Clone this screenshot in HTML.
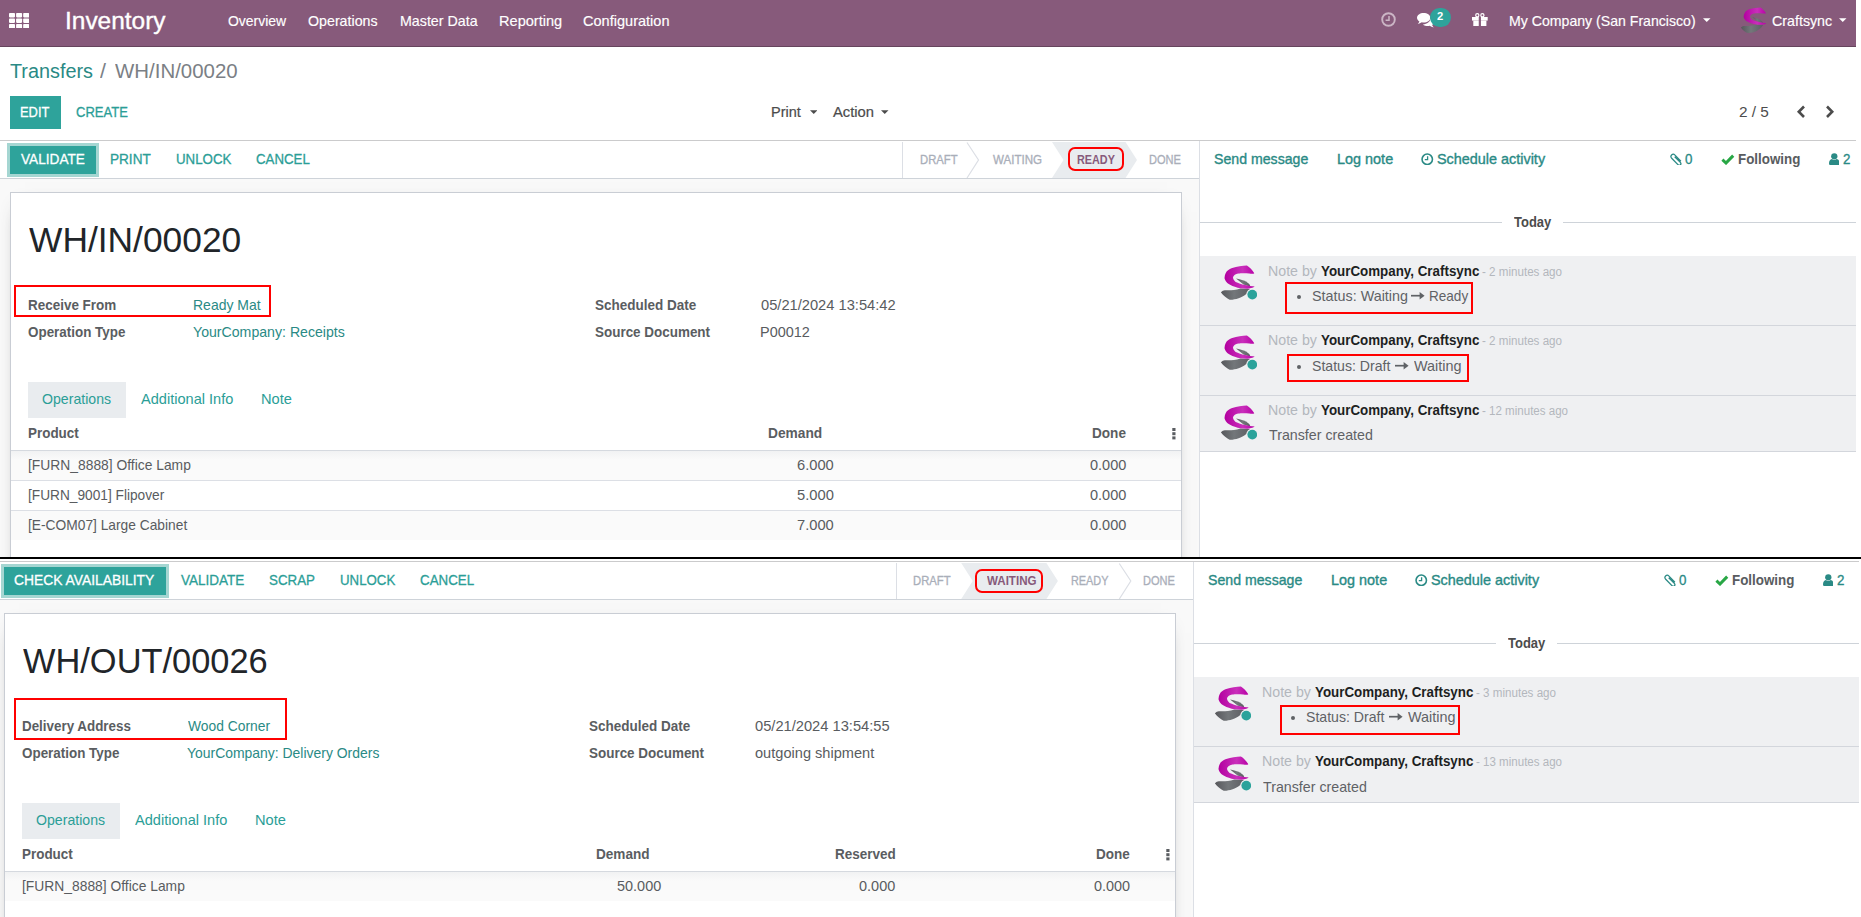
<!DOCTYPE html><html lang="en"><head><meta charset="utf-8"><title>Odoo - Transfers</title><style>

html,body{margin:0;padding:0;background:#fff}
body{width:1861px;height:917px;position:relative;overflow:hidden;font-family:"Liberation Sans",sans-serif}
.screen{position:absolute;left:0;overflow:hidden;background:#fff}
#top{top:0;width:1856px;height:557px}
#bot{top:559px;width:1859px;height:358px}
#bot .in{position:absolute;left:0;top:-559px;width:1859px;height:917px}
.sep{position:absolute;left:0;top:557px;width:1861px;height:2px;background:#000}
.t{position:absolute;white-space:pre;line-height:20px;height:20px;transform-origin:0 50%}

</style></head><body>
<svg width="0" height="0" style="position:absolute" aria-hidden="true"><defs><linearGradient id="lgm" x1="0" y1="0" x2="1" y2="0"><stop offset="0" stop-color="#b3009f"/><stop offset=".6" stop-color="#c92fbb"/><stop offset="1" stop-color="#b800a6"/></linearGradient><linearGradient id="lgg" x1="0" y1="0" x2="1" y2="0"><stop offset="0" stop-color="#56575b"/><stop offset=".45" stop-color="#73777a"/><stop offset="1" stop-color="#5d5e63"/></linearGradient></defs></svg>
<div class="screen" id="top">
<nav class="o_main_navbar">
<div style="position:absolute;left:0px;top:0px;width:1856px;height:46px;background:#875a7b;"></div>
<div style="position:absolute;left:0px;top:46px;width:1856px;height:1px;background:#66455d;"></div>
<svg style="position:absolute;left:9.3px;top:12.7px;" width="20.2" height="15.4" viewBox="0 0 20.2 15.4"><rect x="0.00" y="0.00" width="6" height="4.4" rx=".8" fill="#fff"/><rect x="7.10" y="0.00" width="6" height="4.4" rx=".8" fill="#fff"/><rect x="14.20" y="0.00" width="6" height="4.4" rx=".8" fill="#fff"/><rect x="0.00" y="5.50" width="6" height="4.4" rx=".8" fill="#fff"/><rect x="7.10" y="5.50" width="6" height="4.4" rx=".8" fill="#fff"/><rect x="14.20" y="5.50" width="6" height="4.4" rx=".8" fill="#fff"/><rect x="0.00" y="11.00" width="6" height="4.4" rx=".8" fill="#fff"/><rect x="7.10" y="11.00" width="6" height="4.4" rx=".8" fill="#fff"/><rect x="14.20" y="11.00" width="6" height="4.4" rx=".8" fill="#fff"/></svg>
<svg style="position:absolute;left:1380.6px;top:12.1px;" width="15" height="15" viewBox="0 0 15 15"><circle cx="7.5" cy="7.5" r="6.3" fill="none" stroke="#cbb5c5" stroke-width="1.9"/><path d="M8 4v4.3H4.6" fill="none" stroke="#cbb5c5" stroke-width="1.5"/></svg>
<svg style="position:absolute;left:1417px;top:13.4px;" width="17.5" height="14.5" viewBox="0 0 17.5 14.5"><path fill="#fff" d="M6.6 0C3 0 0 2.1 0 4.8c0 1.5.9 2.8 2.4 3.7-.3.9-.9 1.7-1.6 2.4 1.5-.2 2.9-.8 4-1.6.6.1 1.200.2 1.800.2 3.700 0 6.700-2.100 6.700-4.800S10.300 0 6.600 0z"/><path fill="#fff" d="M14.600 5.500c0 3-3.300 5.400-7.500 5.600 1.200 1 3 1.600 5 1.600.6 0 1.200-.1 1.800-.2 1.100.8 2.500 1.400 4 1.600-.7-.7-1.300-1.500-1.600-2.400 1.500-.9 2.400-2.200 2.400-3.700 0-1-.4-1.900-1.100-2.700z" transform="translate(-1.2 .3)"/></svg>
<div style="position:absolute;left:1430px;top:7.6px;width:21px;height:19px;border-radius:9.500px;background:#2ea39b"></div>
<svg style="position:absolute;left:1472.3px;top:12.7px;" width="15.7" height="13.7" viewBox="0 0 15.7 13.7"><g fill="#fff"><rect x="0" y="4" width="15.7" height="3.6"/><rect x="1.3" y="7.6" width="13.1" height="6.1"/></g><rect x="6.750" y="4" width="2.200" height="9.700" fill="#875a7b"/><circle cx="5.3" cy="2.300" r="1.600" fill="none" stroke="#fff" stroke-width="1.200"/><circle cx="10.400" cy="2.300" r="1.600" fill="none" stroke="#fff" stroke-width="1.200"/></svg>
<svg style="position:absolute;left:1703px;top:18px;" width="7.5" height="4" viewBox="0 0 8 4"><path d="M0 0h8l-4 4z" fill="#fff"/></svg>
<svg style="position:absolute;left:1740.5px;top:7.3px;" width="27" height="27" viewBox="0 0 36 36"><path fill="url(#lgg)" d="M15.1 13.6 C19.5 14.2 24.5 15.8 27.6 18.6 C28.9 19.8 29.3 20.8 29.3 21.7 L22.5 19.4 Z"/><path fill="url(#lgg)" d="M-0.1 27.4 C1 26 2.5 25.2 3.8 25.2 C8 25.6 13 25.4 19.5 23.5 L29.3 24 C28 27.5 23 31.5 17.6 33.3 C14 34.5 10.5 35 8.7 34.7 C6 33.5 2 30.5 -0.1 27.4 Z"/><path fill="url(#lgm)" d="M25.9 0.6 C28.5 2 31.5 5.5 33.3 8.2 C32.5 9 30 8.7 28.3 8.5 C24 8.1 19.5 8.2 17.5 8.5 C13.5 9.2 11.5 11.5 12.2 13.6 C12.8 15.4 13.8 16.2 14.6 17 C20 19.3 28 21.3 33.7 21.5 C31.5 23 28 23.9 25.9 23.7 C21 23.6 17 22.9 14.6 22 C10 20.5 7.3 19 6.3 18 C4 15.5 3.2 13 3.6 12.2 C3.9 9.5 4.8 7.8 5.8 6.3 C7.5 4.4 9.5 3.4 11.2 2.9 C16 1.6 21.5 0.9 25.9 0.6 Z"/></svg>
<svg style="position:absolute;left:1839px;top:18px;" width="7.5" height="4" viewBox="0 0 8 4"><path d="M0 0h8l-4 4z" fill="#fff"/></svg>
<span class="t" style="left:65.08px;top:11.00px;font-size:24px;color:#fff;-webkit-text-stroke:0.35px #fff;transform:scaleX(1.0187);">Inventory</span>
<span class="t" style="left:228.38px;top:11.00px;font-size:14.3px;color:#fff;-webkit-text-stroke:0.15px #fff;transform:scaleX(0.9768);">Overview</span>
<span class="t" style="left:308.36px;top:11.00px;font-size:14.3px;color:#fff;-webkit-text-stroke:0.15px #fff;transform:scaleX(0.9948);">Operations</span>
<span class="t" style="left:399.59px;top:11.00px;font-size:14.3px;color:#fff;-webkit-text-stroke:0.15px #fff;transform:scaleX(0.9965);">Master Data</span>
<span class="t" style="left:499.07px;top:11.00px;font-size:14.3px;color:#fff;-webkit-text-stroke:0.15px #fff;transform:scaleX(1.0195);">Reporting</span>
<span class="t" style="left:583.31px;top:11.00px;font-size:14.3px;color:#fff;-webkit-text-stroke:0.15px #fff;transform:scaleX(1.0172);">Configuration</span>
<span class="t" style="left:1437.31px;top:6.00px;font-size:11.2px;color:#fff;font-weight:700;transform:scaleX(1.0023);">2</span>
<span class="t" style="left:1508.60px;top:11.00px;font-size:14.3px;color:#fff;-webkit-text-stroke:0.15px #fff;transform:scaleX(0.9872);">My Company (San Francisco)</span>
<span class="t" style="left:1771.93px;top:11.00px;font-size:14.3px;color:#fff;-webkit-text-stroke:0.15px #fff;transform:scaleX(0.9966);">Craftsync</span>
</nav>
<header class="o_control_panel">
<div style="position:absolute;left:10px;top:96px;width:51px;height:33px;background:#2ea39b;"></div>
<svg style="position:absolute;left:809.5px;top:109.5px;" width="7.5" height="4" viewBox="0 0 8 4"><path d="M0 0h8l-4 4z" fill="#4c4c4c"/></svg>
<svg style="position:absolute;left:881px;top:109.5px;" width="7.5" height="4" viewBox="0 0 8 4"><path d="M0 0h8l-4 4z" fill="#4c4c4c"/></svg>
<svg style="position:absolute;left:1795.5px;top:104.5px;" width="10" height="13.5" viewBox="0 0 10 13.5"><path d="M8 1.5 2.800 6.750 8 12" fill="none" stroke="#4c4c4c" stroke-width="2.600"/></svg>
<svg style="position:absolute;left:1825px;top:104.5px;" width="10" height="13.5" viewBox="0 0 10 13.5"><path d="M2 1.5 7.200 6.750 2 12" fill="none" stroke="#4c4c4c" stroke-width="2.600"/></svg>
<span class="t" style="left:10.01px;top:61.00px;font-size:19.5px;color:#2a8a85;transform:scaleX(1.0162);">Transfers</span>
<span class="t" style="left:100.07px;top:61.00px;font-size:19.5px;color:#7b8187;transform:scaleX(1.0991);">/</span>
<span class="t" style="left:115.04px;top:61.00px;font-size:19.5px;color:#7b7f85;transform:scaleX(1.0478);">WH/IN/00020</span>
<span class="t" style="left:20.21px;top:102.00px;font-size:14.73px;color:#fff;-webkit-text-stroke:0.3px #fff;transform:scaleX(0.8762);">EDIT</span>
<span class="t" style="left:76.44px;top:102.00px;font-size:14.73px;color:#2b9e97;-webkit-text-stroke:0.3px #2b9e97;transform:scaleX(0.8848);">CREATE</span>
<span class="t" style="left:770.59px;top:102.00px;font-size:14.3px;color:#4c4c4c;-webkit-text-stroke:0.2px #4c4c4c;transform:scaleX(1.0133);">Print</span>
<span class="t" style="left:832.59px;top:102.00px;font-size:14.3px;color:#4c4c4c;-webkit-text-stroke:0.2px #4c4c4c;transform:scaleX(1.0331);">Action</span>
<span class="t" style="left:1739.23px;top:102.00px;font-size:14.3px;color:#4c4c4c;transform:scaleX(1.0756);">2 / 5</span>
</header>
<main class="o_form_sheet_bg">
<div style="position:absolute;left:0px;top:179px;width:1199px;height:378px;background:#f9f9f9;"></div>
<div style="position:absolute;left:10px;top:192px;width:1170px;height:395px;background:#fff;border:1px solid #c9cdd4;box-shadow:0 5px 20px -15px rgba(0,0,0,.8)"></div>
<div style="position:absolute;left:14px;top:285px;width:253px;height:28px;border:2px solid #f00"></div>
<div style="position:absolute;left:28px;top:382px;width:98px;height:36px;background:#e9ecef;"></div>
<svg style="position:absolute;left:1172px;top:428px;" width="4" height="11.5" viewBox="0 0 4 11.5"><g fill="#5a5d61"><rect x=".3" y="0" width="3.200" height="3"/><rect x=".3" y="4.200" width="3.200" height="3"/><rect x=".3" y="8.400" width="3.200" height="3"/></g></svg>
<div style="position:absolute;left:11px;top:450px;width:1170px;height:1px;background:#d5d9df;"></div>
<div style="position:absolute;left:11px;top:451px;width:1170px;height:29px;background:linear-gradient(#f1f2f3,#fafafa 9px,#fafafa);"></div>
<div style="position:absolute;left:11px;top:480px;width:1170px;height:1px;background:#dcdfe5;"></div>
<div style="position:absolute;left:11px;top:510px;width:1170px;height:1px;background:#dcdfe5;"></div>
<div style="position:absolute;left:11px;top:511px;width:1170px;height:29px;background:#fafafa;"></div>
<span class="t" style="left:28.73px;top:230.00px;font-size:35.6px;color:#212529;transform:scaleX(0.9939);">WH/IN/00020</span>
<span class="t" style="left:27.88px;top:295.00px;font-size:14.3px;color:#5a5d61;font-weight:700;transform:scaleX(0.9412);">Receive From</span>
<span class="t" style="left:192.78px;top:295.00px;font-size:14.3px;color:#2a8a85;transform:scaleX(0.9783);">Ready Mat</span>
<span class="t" style="left:28.08px;top:322.00px;font-size:14.3px;color:#5a5d61;font-weight:700;transform:scaleX(0.9383);">Operation Type</span>
<span class="t" style="left:193.05px;top:322.00px;font-size:14.3px;color:#2a8a85;transform:scaleX(0.9884);">YourCompany: Receipts</span>
<span class="t" style="left:595.08px;top:295.00px;font-size:14.3px;color:#5a5d61;font-weight:700;transform:scaleX(0.9447);">Scheduled Date</span>
<span class="t" style="left:760.58px;top:295.00px;font-size:14.3px;color:#595c60;transform:scaleX(1.0261);">05/21/2024 13:54:42</span>
<span class="t" style="left:595.08px;top:322.00px;font-size:14.3px;color:#5a5d61;font-weight:700;transform:scaleX(0.9405);">Source Document</span>
<span class="t" style="left:760.26px;top:322.00px;font-size:14.73px;color:#595c60;transform:scaleX(0.9819);">P00012</span>
<span class="t" style="left:42.30px;top:389.00px;font-size:14.3px;color:#2b9e97;transform:scaleX(0.9872);">Operations</span>
<span class="t" style="left:140.54px;top:389.00px;font-size:14.3px;color:#2b9e97;transform:scaleX(1.0193);">Additional Info</span>
<span class="t" style="left:260.74px;top:389.00px;font-size:14.3px;color:#2b9e97;transform:scaleX(1.0247);">Note</span>
<span class="t" style="left:27.88px;top:423.00px;font-size:14.3px;color:#5a5d61;font-weight:700;transform:scaleX(0.9398);">Product</span>
<span class="t" style="left:767.86px;top:423.00px;font-size:14.3px;color:#5a5d61;font-weight:700;transform:scaleX(0.9611);">Demand</span>
<span class="t" style="left:1092.17px;top:423.00px;font-size:14.3px;color:#5a5d61;font-weight:700;transform:scaleX(0.9500);">Done</span>
<span class="t" style="left:27.82px;top:455.00px;font-size:14.3px;color:#595c60;transform:scaleX(0.9682);">[FURN_8888] Office Lamp</span>
<span class="t" style="left:796.73px;top:455.00px;font-size:14.3px;color:#595c60;transform:scaleX(1.0287);">6.000</span>
<span class="t" style="left:1089.88px;top:455.00px;font-size:14.3px;color:#595c60;transform:scaleX(1.0160);">0.000</span>
<span class="t" style="left:27.83px;top:485.00px;font-size:14.3px;color:#595c60;transform:scaleX(0.9577);">[FURN_9001] Flipover</span>
<span class="t" style="left:796.65px;top:485.00px;font-size:14.3px;color:#595c60;transform:scaleX(1.0312);">5.000</span>
<span class="t" style="left:1089.88px;top:485.00px;font-size:14.3px;color:#595c60;transform:scaleX(1.0160);">0.000</span>
<span class="t" style="left:27.83px;top:515.00px;font-size:14.3px;color:#595c60;transform:scaleX(0.9634);">[E-COM07] Large Cabinet</span>
<span class="t" style="left:796.75px;top:515.00px;font-size:14.3px;color:#595c60;transform:scaleX(1.0283);">7.000</span>
<span class="t" style="left:1089.88px;top:515.00px;font-size:14.3px;color:#595c60;transform:scaleX(1.0160);">0.000</span>
</main>
<div class="o_form_statusbar">
<div style="position:absolute;left:0px;top:140px;width:1856px;height:1px;background:#cbcbcc;"></div>
<div style="position:absolute;left:0px;top:178px;width:1199px;height:1px;background:#ced3d9;"></div>
<div style="position:absolute;left:10px;top:146px;width:86px;height:28px;background:#2ea39b;box-shadow:0 0 0 3px #a5d6d2"></div>
<svg style="position:absolute;left:902px;top:142px;" width="311" height="36" viewBox="0 0 311 36"><polygon points="150,0 223.5,0 235.0,18 223.5,36 150,36 161.5,18" fill="#e9ecef"/><path d="M0.5 0V36" stroke="#dcdfe5" stroke-width="1" fill="none"/><path d="M65 0.5 L76.5 18 L65 36" stroke="#dcdfe5" stroke-width="1.200" fill="none"/></svg>
<div style="position:absolute;left:1068px;top:147px;width:52px;height:20px;border:2px solid #f00;border-radius:7px"></div>
<span class="t" style="left:21.08px;top:149.00px;font-size:14.73px;color:#fff;-webkit-text-stroke:0.3px #fff;transform:scaleX(0.9260);">VALIDATE</span>
<span class="t" style="left:110.17px;top:149.00px;font-size:14.73px;color:#2b9e97;-webkit-text-stroke:0.3px #2b9e97;transform:scaleX(0.9227);">PRINT</span>
<span class="t" style="left:175.72px;top:149.00px;font-size:14.73px;color:#2b9e97;-webkit-text-stroke:0.3px #2b9e97;transform:scaleX(0.9036);">UNLOCK</span>
<span class="t" style="left:255.93px;top:149.00px;font-size:14.73px;color:#2b9e97;-webkit-text-stroke:0.3px #2b9e97;transform:scaleX(0.9011);">CANCEL</span>
<span class="t" style="left:919.78px;top:150.00px;font-size:12.36px;color:#a9aeb9;-webkit-text-stroke:0.3px #a9aeb9;transform:scaleX(0.9122);">DRAFT</span>
<span class="t" style="left:993.09px;top:150.00px;font-size:12.36px;color:#a9aeb9;-webkit-text-stroke:0.3px #a9aeb9;transform:scaleX(0.9343);">WAITING</span>
<span class="t" style="left:1076.81px;top:150.00px;font-size:12.36px;color:#875a7b;font-weight:700;transform:scaleX(0.8751);">READY</span>
<span class="t" style="left:1149.29px;top:150.00px;font-size:12.36px;color:#a9aeb9;-webkit-text-stroke:0.3px #a9aeb9;transform:scaleX(0.8946);">DONE</span>
</div>
<aside class="o_chatter">
<div style="position:absolute;left:1199px;top:141px;width:1px;height:416px;background:#dcdfe5;"></div>
<svg style="position:absolute;left:1421px;top:152.5px;" width="12.5" height="12.5" viewBox="0 0 12.5 12.5"><circle cx="6.250" cy="6.250" r="5.200" fill="none" stroke="#2a8a85" stroke-width="1.600"/><path d="M6.600 3.200v3.500H3.800" fill="none" stroke="#2a8a85" stroke-width="1.300"/></svg>
<svg style="position:absolute;left:1669.8px;top:152.6px;" width="12.6" height="12.8" viewBox="0 0 12.6 12.8"><path d="M10.900 8.300 5 2.100C4 1.100 2.500 1.100 1.600 2 .7 2.900 .8 4.300 1.700 5.300L8 11.700c.7.700 1.800.700 2.400.100.600-.600.600-1.700-.100-2.400L4.700 3.800" fill="none" stroke="#2a8a85" stroke-width="1.250"/></svg>
<svg style="position:absolute;left:1721px;top:153.8px;" width="13.6" height="10.8" viewBox="0 0 13.6 10.8"><path d="M1.400 5.700 5 9 12.200 1.600" fill="none" stroke="#28a745" stroke-width="3"/></svg>
<svg style="position:absolute;left:1828.8px;top:152.6px;" width="10.6" height="12.4" viewBox="0 0 10.6 12.4"><circle cx="5.300" cy="3.300" r="3.150" fill="#2a8a85"/><path d="M0 10.600C0 8 1 6.300 3 6c.600.650 1.400 1.050 2.300 1.050S7 6.650 7.600 6c2 .300 3 2 3 4.600 0 1.100-.800 1.800-1.800 1.800H1.800C.8 12.400 0 11.700 0 10.600z" fill="#2a8a85"/></svg>
<div style="position:absolute;left:1200px;top:222px;width:302px;height:1px;background:#ced3d9;"></div>
<div style="position:absolute;left:1563px;top:222px;width:293px;height:1px;background:#ced3d9;"></div>
<div style="position:absolute;left:1200px;top:256px;width:656px;height:69px;background:#eff0f2;"></div>
<div style="position:absolute;left:1200px;top:325px;width:656px;height:1px;background:#d3d6dc;"></div>
<svg style="position:absolute;left:1221px;top:265px;" width="36" height="36" viewBox="0 0 36 36"><path fill="url(#lgg)" d="M15.1 13.6 C19.5 14.2 24.5 15.8 27.6 18.6 C28.9 19.8 29.3 20.8 29.3 21.7 L22.5 19.4 Z"/><path fill="url(#lgg)" d="M-0.1 27.4 C1 26 2.5 25.2 3.8 25.2 C8 25.6 13 25.4 19.5 23.5 L29.3 24 C28 27.5 23 31.5 17.6 33.3 C14 34.5 10.5 35 8.7 34.7 C6 33.5 2 30.5 -0.1 27.4 Z"/><path fill="url(#lgm)" d="M25.9 0.6 C28.5 2 31.5 5.5 33.3 8.2 C32.5 9 30 8.7 28.3 8.5 C24 8.1 19.5 8.2 17.5 8.5 C13.5 9.2 11.5 11.5 12.2 13.6 C12.8 15.4 13.8 16.2 14.6 17 C20 19.3 28 21.3 33.7 21.5 C31.5 23 28 23.9 25.9 23.7 C21 23.6 17 22.9 14.6 22 C10 20.5 7.3 19 6.3 18 C4 15.5 3.2 13 3.6 12.2 C3.9 9.5 4.8 7.8 5.8 6.3 C7.5 4.4 9.5 3.4 11.2 2.9 C16 1.6 21.5 0.9 25.9 0.6 Z"/><circle cx="31.3" cy="29.6" r="6" fill="#eff0f2"/><circle cx="31.3" cy="29.6" r="4.9" fill="#2ba39b"/></svg>
<div style="position:absolute;left:1297px;top:295.3px;width:4.200px;height:4.200px;border-radius:50%;background:#5f6266"></div>
<svg style="position:absolute;left:1411.3px;top:292.3px;" width="13.6" height="7.4" viewBox="0 0 13.6 7.4"><path d="M0 3.700H10.500" stroke="#5f6266" stroke-width="1.700" fill="none"/><path d="M8.600 0 13.600 3.700 8.600 7.400z" fill="#5f6266"/></svg>
<div style="position:absolute;left:1285px;top:282px;width:184px;height:28px;border:2px solid #f00"></div>
<div style="position:absolute;left:1200px;top:326px;width:656px;height:69px;background:#eff0f2;"></div>
<div style="position:absolute;left:1200px;top:395px;width:656px;height:1px;background:#d3d6dc;"></div>
<svg style="position:absolute;left:1221px;top:335px;" width="36" height="36" viewBox="0 0 36 36"><path fill="url(#lgg)" d="M15.1 13.6 C19.5 14.2 24.5 15.8 27.6 18.6 C28.9 19.8 29.3 20.8 29.3 21.7 L22.5 19.4 Z"/><path fill="url(#lgg)" d="M-0.1 27.4 C1 26 2.5 25.2 3.8 25.2 C8 25.6 13 25.4 19.5 23.5 L29.3 24 C28 27.5 23 31.5 17.6 33.3 C14 34.5 10.5 35 8.7 34.7 C6 33.5 2 30.5 -0.1 27.4 Z"/><path fill="url(#lgm)" d="M25.9 0.6 C28.5 2 31.5 5.5 33.3 8.2 C32.5 9 30 8.7 28.3 8.5 C24 8.1 19.5 8.2 17.5 8.5 C13.5 9.2 11.5 11.5 12.2 13.6 C12.8 15.4 13.8 16.2 14.6 17 C20 19.3 28 21.3 33.7 21.5 C31.5 23 28 23.9 25.9 23.7 C21 23.6 17 22.9 14.6 22 C10 20.5 7.3 19 6.3 18 C4 15.5 3.2 13 3.6 12.2 C3.9 9.5 4.8 7.8 5.8 6.3 C7.5 4.4 9.5 3.4 11.2 2.9 C16 1.6 21.5 0.9 25.9 0.6 Z"/><circle cx="31.3" cy="29.6" r="6" fill="#eff0f2"/><circle cx="31.3" cy="29.6" r="4.9" fill="#2ba39b"/></svg>
<div style="position:absolute;left:1297px;top:365.3px;width:4.200px;height:4.200px;border-radius:50%;background:#5f6266"></div>
<svg style="position:absolute;left:1395px;top:362.3px;" width="13.6" height="7.4" viewBox="0 0 13.6 7.4"><path d="M0 3.700H10.500" stroke="#5f6266" stroke-width="1.700" fill="none"/><path d="M8.600 0 13.600 3.700 8.600 7.400z" fill="#5f6266"/></svg>
<div style="position:absolute;left:1287px;top:354px;width:178px;height:24px;border:2px solid #f00"></div>
<div style="position:absolute;left:1200px;top:396px;width:656px;height:55px;background:#eff0f2;"></div>
<div style="position:absolute;left:1200px;top:451px;width:656px;height:1px;background:#d3d6dc;"></div>
<svg style="position:absolute;left:1221px;top:405px;" width="36" height="36" viewBox="0 0 36 36"><path fill="url(#lgg)" d="M15.1 13.6 C19.5 14.2 24.5 15.8 27.6 18.6 C28.9 19.8 29.3 20.8 29.3 21.7 L22.5 19.4 Z"/><path fill="url(#lgg)" d="M-0.1 27.4 C1 26 2.5 25.2 3.8 25.2 C8 25.6 13 25.4 19.5 23.5 L29.3 24 C28 27.5 23 31.5 17.6 33.3 C14 34.5 10.5 35 8.7 34.7 C6 33.5 2 30.5 -0.1 27.4 Z"/><path fill="url(#lgm)" d="M25.9 0.6 C28.5 2 31.5 5.5 33.3 8.2 C32.5 9 30 8.7 28.3 8.5 C24 8.1 19.5 8.2 17.5 8.5 C13.5 9.2 11.5 11.5 12.2 13.6 C12.8 15.4 13.8 16.2 14.6 17 C20 19.3 28 21.3 33.7 21.5 C31.5 23 28 23.9 25.9 23.7 C21 23.6 17 22.9 14.6 22 C10 20.5 7.3 19 6.3 18 C4 15.5 3.2 13 3.6 12.2 C3.9 9.5 4.8 7.8 5.8 6.3 C7.5 4.4 9.5 3.4 11.2 2.9 C16 1.6 21.5 0.9 25.9 0.6 Z"/><circle cx="31.3" cy="29.6" r="6" fill="#eff0f2"/><circle cx="31.3" cy="29.6" r="4.9" fill="#2ba39b"/></svg>
<span class="t" style="left:1213.91px;top:149.00px;font-size:14.3px;color:#2a8a85;-webkit-text-stroke:0.35px #2a8a85;transform:scaleX(0.9885);">Send message</span>
<span class="t" style="left:1336.63px;top:149.00px;font-size:14.3px;color:#2a8a85;-webkit-text-stroke:0.35px #2a8a85;transform:scaleX(1.0089);">Log note</span>
<span class="t" style="left:1436.90px;top:149.00px;font-size:14.3px;color:#2a8a85;-webkit-text-stroke:0.35px #2a8a85;transform:scaleX(1.0074);">Schedule activity</span>
<span class="t" style="left:1685.01px;top:149.00px;font-size:14.3px;color:#2a8a85;-webkit-text-stroke:0.3px #2a8a85;transform:scaleX(0.9338);">0</span>
<span class="t" style="left:1738.18px;top:149.00px;font-size:14.3px;color:#595c60;font-weight:700;transform:scaleX(0.9357);">Following</span>
<span class="t" style="left:1842.50px;top:149.00px;font-size:14.3px;color:#2a8a85;-webkit-text-stroke:0.3px #2a8a85;transform:scaleX(0.9361);">2</span>
<span class="t" style="left:1513.76px;top:212.00px;font-size:14.3px;color:#4c4c4c;font-weight:700;transform:scaleX(0.9072);">Today</span>
<span class="t" style="left:1267.87px;top:261.00px;font-size:14.3px;color:#b3b7bd;transform:scaleX(0.9935);">Note by</span>
<span class="t" style="left:1320.70px;top:261.00px;font-size:14.3px;color:#1d1f22;font-weight:700;transform:scaleX(0.9343);">YourCompany, Craftsync</span>
<span class="t" style="left:1482.42px;top:262.00px;font-size:12px;color:#b3b7bd;transform:scaleX(0.9673);">- 2 minutes ago</span>
<span class="t" style="left:1311.74px;top:286.00px;font-size:14.3px;color:#5f6266;transform:scaleX(1.0042);">Status: Waiting</span>
<span class="t" style="left:1428.81px;top:286.00px;font-size:14.3px;color:#5f6266;transform:scaleX(0.9484);">Ready</span>
<span class="t" style="left:1267.87px;top:330.00px;font-size:14.3px;color:#b3b7bd;transform:scaleX(0.9935);">Note by</span>
<span class="t" style="left:1320.70px;top:330.00px;font-size:14.3px;color:#1d1f22;font-weight:700;transform:scaleX(0.9343);">YourCompany, Craftsync</span>
<span class="t" style="left:1482.42px;top:331.00px;font-size:12px;color:#b3b7bd;transform:scaleX(0.9673);">- 2 minutes ago</span>
<span class="t" style="left:1311.75px;top:356.00px;font-size:14.3px;color:#5f6266;transform:scaleX(0.9868);">Status: Draft</span>
<span class="t" style="left:1413.74px;top:356.00px;font-size:14.3px;color:#5f6266;transform:scaleX(1.0086);">Waiting</span>
<span class="t" style="left:1267.87px;top:400.00px;font-size:14.3px;color:#b3b7bd;transform:scaleX(0.9935);">Note by</span>
<span class="t" style="left:1320.70px;top:400.00px;font-size:14.3px;color:#1d1f22;font-weight:700;transform:scaleX(0.9343);">YourCompany, Craftsync</span>
<span class="t" style="left:1482.42px;top:401.00px;font-size:12px;color:#b3b7bd;transform:scaleX(0.9626);">- 12 minutes ago</span>
<span class="t" style="left:1268.52px;top:425.00px;font-size:14.3px;color:#5f6266;transform:scaleX(0.9950);">Transfer created</span>
</aside>
</div>
<div class="screen" id="bot"><div class="in">
<main class="o_form_sheet_bg">
<div style="position:absolute;left:0px;top:600px;width:1193px;height:317px;background:#f9f9f9;"></div>
<div style="position:absolute;left:4px;top:613px;width:1170px;height:334px;background:#fff;border:1px solid #c9cdd4;box-shadow:0 5px 20px -15px rgba(0,0,0,.8)"></div>
<div style="position:absolute;left:14px;top:698px;width:269px;height:38px;border:2px solid #f00"></div>
<div style="position:absolute;left:22px;top:803px;width:98px;height:36px;background:#e9ecef;"></div>
<svg style="position:absolute;left:1165.5px;top:849px;" width="4" height="11.5" viewBox="0 0 4 11.5"><g fill="#5a5d61"><rect x=".3" y="0" width="3.200" height="3"/><rect x=".3" y="4.200" width="3.200" height="3"/><rect x=".3" y="8.400" width="3.200" height="3"/></g></svg>
<div style="position:absolute;left:5px;top:871px;width:1170px;height:1px;background:#d5d9df;"></div>
<div style="position:absolute;left:5px;top:872px;width:1170px;height:29px;background:linear-gradient(#f1f2f3,#fafafa 9px,#fafafa);"></div>
<span class="t" style="left:22.73px;top:651.00px;font-size:35.6px;color:#212529;transform:scaleX(0.9669);">WH/OUT/00026</span>
<span class="t" style="left:21.88px;top:716.00px;font-size:14.3px;color:#5a5d61;font-weight:700;transform:scaleX(0.9362);">Delivery Address</span>
<span class="t" style="left:187.74px;top:716.00px;font-size:14.3px;color:#2a8a85;transform:scaleX(0.9676);">Wood Corner</span>
<span class="t" style="left:22.08px;top:743.00px;font-size:14.3px;color:#5a5d61;font-weight:700;transform:scaleX(0.9383);">Operation Type</span>
<span class="t" style="left:187.06px;top:743.00px;font-size:14.3px;color:#2a8a85;transform:scaleX(0.9748);">YourCompany: Delivery Orders</span>
<span class="t" style="left:589.08px;top:716.00px;font-size:14.3px;color:#5a5d61;font-weight:700;transform:scaleX(0.9447);">Scheduled Date</span>
<span class="t" style="left:754.58px;top:716.00px;font-size:14.3px;color:#595c60;transform:scaleX(1.0260);">05/21/2024 13:54:55</span>
<span class="t" style="left:589.08px;top:743.00px;font-size:14.3px;color:#5a5d61;font-weight:700;transform:scaleX(0.9405);">Source Document</span>
<span class="t" style="left:754.56px;top:743.00px;font-size:14.3px;color:#595c60;transform:scaleX(1.0207);">outgoing shipment</span>
<span class="t" style="left:36.30px;top:810.00px;font-size:14.3px;color:#2b9e97;transform:scaleX(0.9872);">Operations</span>
<span class="t" style="left:134.54px;top:810.00px;font-size:14.3px;color:#2b9e97;transform:scaleX(1.0193);">Additional Info</span>
<span class="t" style="left:254.74px;top:810.00px;font-size:14.3px;color:#2b9e97;transform:scaleX(1.0247);">Note</span>
<span class="t" style="left:21.88px;top:844.00px;font-size:14.3px;color:#5a5d61;font-weight:700;transform:scaleX(0.9398);">Product</span>
<span class="t" style="left:595.97px;top:844.00px;font-size:14.3px;color:#5a5d61;font-weight:700;transform:scaleX(0.9502);">Demand</span>
<span class="t" style="left:834.67px;top:844.00px;font-size:14.3px;color:#5a5d61;font-weight:700;transform:scaleX(0.9439);">Reserved</span>
<span class="t" style="left:1096.17px;top:844.00px;font-size:14.3px;color:#5a5d61;font-weight:700;transform:scaleX(0.9442);">Done</span>
<span class="t" style="left:21.82px;top:876.00px;font-size:14.3px;color:#595c60;transform:scaleX(0.9682);">[FURN_8888] Office Lamp</span>
<span class="t" style="left:616.96px;top:876.00px;font-size:14.3px;color:#595c60;transform:scaleX(1.0111);">50.000</span>
<span class="t" style="left:859.38px;top:876.00px;font-size:14.3px;color:#595c60;transform:scaleX(1.0131);">0.000</span>
<span class="t" style="left:1093.89px;top:876.00px;font-size:14.3px;color:#595c60;transform:scaleX(1.0102);">0.000</span>
</main>
<div class="o_form_statusbar">
<div style="position:absolute;left:0px;top:561px;width:1859px;height:1px;background:#cbcbcc;"></div>
<div style="position:absolute;left:0px;top:599px;width:1193px;height:1px;background:#ced3d9;"></div>
<div style="position:absolute;left:4px;top:567px;width:162px;height:28px;background:#2ea39b;box-shadow:0 0 0 3px #a5d6d2"></div>
<svg style="position:absolute;left:896px;top:563px;" width="311" height="36" viewBox="0 0 311 36"><polygon points="65.20000000000005,0 150.4000000000001,0 161.9000000000001,18 150.4000000000001,36 65.20000000000005,36 76.70000000000005,18" fill="#e9ecef"/><path d="M0.5 0V36" stroke="#dcdfe5" stroke-width="1" fill="none"/><path d="M223.29999999999995 0.5 L234.79999999999995 18 L223.29999999999995 36" stroke="#dcdfe5" stroke-width="1.200" fill="none"/></svg>
<div style="position:absolute;left:975px;top:569px;width:64px;height:20px;border:2px solid #f00;border-radius:7px"></div>
<span class="t" style="left:14.41px;top:570.00px;font-size:14.73px;color:#fff;-webkit-text-stroke:0.3px #fff;transform:scaleX(0.9400);">CHECK AVAILABILITY</span>
<span class="t" style="left:180.58px;top:570.00px;font-size:14.73px;color:#2b9e97;-webkit-text-stroke:0.3px #2b9e97;transform:scaleX(0.9187);">VALIDATE</span>
<span class="t" style="left:269.35px;top:570.00px;font-size:14.73px;color:#2b9e97;-webkit-text-stroke:0.3px #2b9e97;transform:scaleX(0.9073);">SCRAP</span>
<span class="t" style="left:339.93px;top:570.00px;font-size:14.73px;color:#2b9e97;-webkit-text-stroke:0.3px #2b9e97;transform:scaleX(0.9003);">UNLOCK</span>
<span class="t" style="left:420.13px;top:570.00px;font-size:14.73px;color:#2b9e97;-webkit-text-stroke:0.3px #2b9e97;transform:scaleX(0.9061);">CANCEL</span>
<span class="t" style="left:913.48px;top:571.00px;font-size:12.36px;color:#a9aeb9;-webkit-text-stroke:0.3px #a9aeb9;transform:scaleX(0.9122);">DRAFT</span>
<span class="t" style="left:987.06px;top:571.00px;font-size:12.36px;color:#875a7b;font-weight:700;transform:scaleX(0.9367);">WAITING</span>
<span class="t" style="left:1071.01px;top:571.00px;font-size:12.36px;color:#a9aeb9;-webkit-text-stroke:0.3px #a9aeb9;transform:scaleX(0.8801);">READY</span>
<span class="t" style="left:1143.49px;top:571.00px;font-size:12.36px;color:#a9aeb9;-webkit-text-stroke:0.3px #a9aeb9;transform:scaleX(0.8946);">DONE</span>
</div>
<aside class="o_chatter">
<div style="position:absolute;left:1193px;top:562px;width:1px;height:355px;background:#dcdfe5;"></div>
<svg style="position:absolute;left:1415px;top:573.5px;" width="12.5" height="12.5" viewBox="0 0 12.5 12.5"><circle cx="6.250" cy="6.250" r="5.200" fill="none" stroke="#2a8a85" stroke-width="1.600"/><path d="M6.600 3.200v3.500H3.800" fill="none" stroke="#2a8a85" stroke-width="1.300"/></svg>
<svg style="position:absolute;left:1663.8px;top:573.6px;" width="12.6" height="12.8" viewBox="0 0 12.6 12.8"><path d="M10.900 8.300 5 2.100C4 1.100 2.500 1.100 1.600 2 .7 2.900 .8 4.300 1.700 5.300L8 11.700c.7.700 1.800.700 2.400.100.600-.600.600-1.700-.100-2.400L4.700 3.800" fill="none" stroke="#2a8a85" stroke-width="1.250"/></svg>
<svg style="position:absolute;left:1715px;top:574.8px;" width="13.6" height="10.8" viewBox="0 0 13.6 10.8"><path d="M1.400 5.700 5 9 12.200 1.600" fill="none" stroke="#28a745" stroke-width="3"/></svg>
<svg style="position:absolute;left:1822.8px;top:573.6px;" width="10.6" height="12.4" viewBox="0 0 10.6 12.4"><circle cx="5.300" cy="3.300" r="3.150" fill="#2a8a85"/><path d="M0 10.600C0 8 1 6.300 3 6c.600.650 1.400 1.050 2.300 1.050S7 6.650 7.600 6c2 .300 3 2 3 4.600 0 1.100-.800 1.800-1.800 1.800H1.800C.8 12.400 0 11.700 0 10.600z" fill="#2a8a85"/></svg>
<div style="position:absolute;left:1194px;top:643px;width:302px;height:1px;background:#ced3d9;"></div>
<div style="position:absolute;left:1557px;top:643px;width:302px;height:1px;background:#ced3d9;"></div>
<div style="position:absolute;left:1194px;top:677px;width:665px;height:69px;background:#eff0f2;"></div>
<div style="position:absolute;left:1194px;top:746px;width:665px;height:1px;background:#d3d6dc;"></div>
<svg style="position:absolute;left:1215px;top:686px;" width="36" height="36" viewBox="0 0 36 36"><path fill="url(#lgg)" d="M15.1 13.6 C19.5 14.2 24.5 15.8 27.6 18.6 C28.9 19.8 29.3 20.8 29.3 21.7 L22.5 19.4 Z"/><path fill="url(#lgg)" d="M-0.1 27.4 C1 26 2.5 25.2 3.8 25.2 C8 25.6 13 25.4 19.5 23.5 L29.3 24 C28 27.5 23 31.5 17.6 33.3 C14 34.5 10.5 35 8.7 34.7 C6 33.5 2 30.5 -0.1 27.4 Z"/><path fill="url(#lgm)" d="M25.9 0.6 C28.5 2 31.5 5.5 33.3 8.2 C32.5 9 30 8.7 28.3 8.5 C24 8.1 19.5 8.2 17.5 8.5 C13.5 9.2 11.5 11.5 12.2 13.6 C12.8 15.4 13.8 16.2 14.6 17 C20 19.3 28 21.3 33.7 21.5 C31.5 23 28 23.9 25.9 23.7 C21 23.6 17 22.9 14.6 22 C10 20.5 7.3 19 6.3 18 C4 15.5 3.2 13 3.6 12.2 C3.9 9.5 4.8 7.8 5.8 6.3 C7.5 4.4 9.5 3.4 11.2 2.9 C16 1.6 21.5 0.9 25.9 0.6 Z"/><circle cx="31.3" cy="29.6" r="6" fill="#eff0f2"/><circle cx="31.3" cy="29.6" r="4.9" fill="#2ba39b"/></svg>
<div style="position:absolute;left:1291px;top:716.3px;width:4.200px;height:4.200px;border-radius:50%;background:#5f6266"></div>
<svg style="position:absolute;left:1389px;top:713.3px;" width="13.6" height="7.4" viewBox="0 0 13.6 7.4"><path d="M0 3.700H10.500" stroke="#5f6266" stroke-width="1.700" fill="none"/><path d="M8.600 0 13.600 3.700 8.600 7.400z" fill="#5f6266"/></svg>
<div style="position:absolute;left:1280px;top:705px;width:176px;height:26px;border:2px solid #f00"></div>
<div style="position:absolute;left:1194px;top:747px;width:665px;height:55px;background:#eff0f2;"></div>
<div style="position:absolute;left:1194px;top:802px;width:665px;height:1px;background:#d3d6dc;"></div>
<svg style="position:absolute;left:1215px;top:756px;" width="36" height="36" viewBox="0 0 36 36"><path fill="url(#lgg)" d="M15.1 13.6 C19.5 14.2 24.5 15.8 27.6 18.6 C28.9 19.8 29.3 20.8 29.3 21.7 L22.5 19.4 Z"/><path fill="url(#lgg)" d="M-0.1 27.4 C1 26 2.5 25.2 3.8 25.2 C8 25.6 13 25.4 19.5 23.5 L29.3 24 C28 27.5 23 31.5 17.6 33.3 C14 34.5 10.5 35 8.7 34.7 C6 33.5 2 30.5 -0.1 27.4 Z"/><path fill="url(#lgm)" d="M25.9 0.6 C28.5 2 31.5 5.5 33.3 8.2 C32.5 9 30 8.7 28.3 8.5 C24 8.1 19.5 8.2 17.5 8.5 C13.5 9.2 11.5 11.5 12.2 13.6 C12.8 15.4 13.8 16.2 14.6 17 C20 19.3 28 21.3 33.7 21.5 C31.5 23 28 23.9 25.9 23.7 C21 23.6 17 22.9 14.6 22 C10 20.5 7.3 19 6.3 18 C4 15.5 3.2 13 3.6 12.2 C3.9 9.5 4.8 7.8 5.8 6.3 C7.5 4.4 9.5 3.4 11.2 2.9 C16 1.6 21.5 0.9 25.9 0.6 Z"/><circle cx="31.3" cy="29.6" r="6" fill="#eff0f2"/><circle cx="31.3" cy="29.6" r="4.9" fill="#2ba39b"/></svg>
<span class="t" style="left:1207.91px;top:570.00px;font-size:14.3px;color:#2a8a85;-webkit-text-stroke:0.35px #2a8a85;transform:scaleX(0.9885);">Send message</span>
<span class="t" style="left:1330.63px;top:570.00px;font-size:14.3px;color:#2a8a85;-webkit-text-stroke:0.35px #2a8a85;transform:scaleX(1.0089);">Log note</span>
<span class="t" style="left:1430.90px;top:570.00px;font-size:14.3px;color:#2a8a85;-webkit-text-stroke:0.35px #2a8a85;transform:scaleX(1.0074);">Schedule activity</span>
<span class="t" style="left:1679.01px;top:570.00px;font-size:14.3px;color:#2a8a85;-webkit-text-stroke:0.3px #2a8a85;transform:scaleX(0.9338);">0</span>
<span class="t" style="left:1732.18px;top:570.00px;font-size:14.3px;color:#595c60;font-weight:700;transform:scaleX(0.9357);">Following</span>
<span class="t" style="left:1836.50px;top:570.00px;font-size:14.3px;color:#2a8a85;-webkit-text-stroke:0.3px #2a8a85;transform:scaleX(0.9361);">2</span>
<span class="t" style="left:1507.76px;top:633.00px;font-size:14.3px;color:#4c4c4c;font-weight:700;transform:scaleX(0.9072);">Today</span>
<span class="t" style="left:1261.87px;top:682.00px;font-size:14.3px;color:#b3b7bd;transform:scaleX(0.9935);">Note by</span>
<span class="t" style="left:1314.70px;top:682.00px;font-size:14.3px;color:#1d1f22;font-weight:700;transform:scaleX(0.9343);">YourCompany, Craftsync</span>
<span class="t" style="left:1476.42px;top:683.00px;font-size:12px;color:#b3b7bd;transform:scaleX(0.9673);">- 3 minutes ago</span>
<span class="t" style="left:1305.75px;top:707.00px;font-size:14.3px;color:#5f6266;transform:scaleX(0.9868);">Status: Draft</span>
<span class="t" style="left:1407.74px;top:707.00px;font-size:14.3px;color:#5f6266;transform:scaleX(1.0086);">Waiting</span>
<span class="t" style="left:1261.87px;top:751.00px;font-size:14.3px;color:#b3b7bd;transform:scaleX(0.9935);">Note by</span>
<span class="t" style="left:1314.70px;top:751.00px;font-size:14.3px;color:#1d1f22;font-weight:700;transform:scaleX(0.9343);">YourCompany, Craftsync</span>
<span class="t" style="left:1476.42px;top:752.00px;font-size:12px;color:#b3b7bd;transform:scaleX(0.9626);">- 13 minutes ago</span>
<span class="t" style="left:1262.52px;top:777.00px;font-size:14.3px;color:#5f6266;transform:scaleX(0.9950);">Transfer created</span>
</aside>
</div></div>
<div class="sep"></div></body></html>
